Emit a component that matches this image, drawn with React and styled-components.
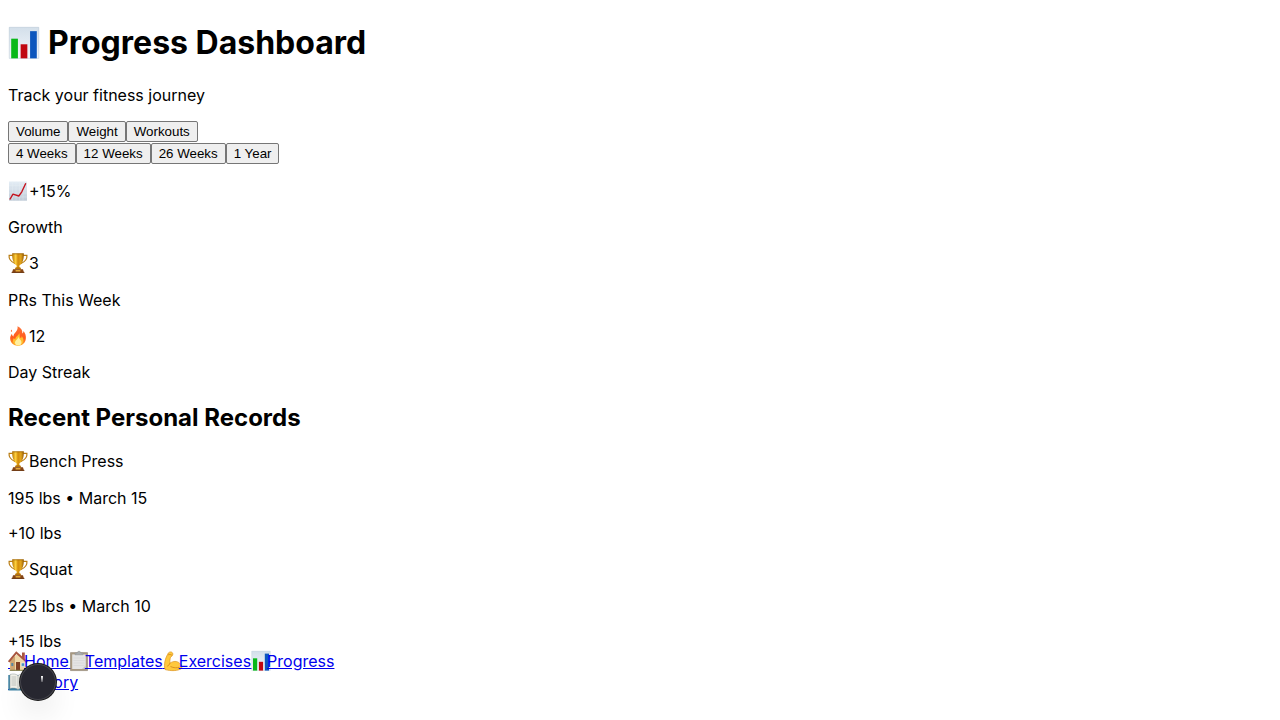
import React from "react";
import styled, { createGlobalStyle } from "styled-components";

const GlobalStyle = createGlobalStyle`
  body {
    margin: 0;
    padding: 0 8px;
    background: #fff;
    color: #000;
    font-family: Inter, "Liberation Sans", sans-serif;
    font-size: 16px;
    line-height: 19px;
  }
`;

const Title = styled.h1`
  display: flex;
  align-items: center;
  gap: 8px;
  margin: 0;
  padding-top: 23px;
  font-size: 32px;
  font-weight: 700;
  line-height: 40px;
`;

const SectionTitle = styled.h2`
  margin: 21px 0 18px;
  font-size: 24px;
  font-weight: 700;
  line-height: 30px;
`;

const Text = styled.p`
  margin: 16px 0;
`;

const Intro = styled(Text)`
  margin: 23px 0 16px;
`;

const ButtonRow = styled.div`
  display: flex;
  height: 22px;
  align-items: flex-start;
`;

const RangeButton = styled.button`
  padding: 2px 7px;
  border: 1px solid #767676;
  border-radius: 2px;
  background: #efefef;
  color: #000;
  font-family: "Liberation Sans", Arial, sans-serif;
`;

const IconLine = styled.div`
  display: flex;
  align-items: flex-start;
  gap: 1px;
  height: ${(p) => (p.$tall ? 22 : 21)}px;
  margin-top: 16px;
  line-height: 21px;
`;

const Delta = styled.div`
  margin-top: 16px;
`;

const Icon = styled.svg`
  display: block;
  flex: none;
  width: ${(p) => p.$size}px;
  height: ${(p) => p.$size}px;
`;

const Nav = styled.nav`
  line-height: 21px;
`;

const NavRow = styled.div`
  display: flex;
`;

const NavLink = styled.a`
  display: flex;
  color: #0000ee;
  text-decoration: underline;
`;

const NavIcon = styled.span`
  width: 16px;
  height: 17px;
  border-bottom: 1px solid #0000ee;
`;

const DevButton = styled.button`
  position: fixed;
  left: 20px;
  bottom: 20px;
  display: grid;
  place-items: center;
  width: 36px;
  height: 36px;
  padding: 0;
  border: 0;
  border-radius: 50%;
  background: #272730;
  box-shadow:
    0 0 0 1px #171717,
    inset 0 0 0 1px rgba(255, 255, 255, 0.14),
    0 16px 32px -8px rgba(0, 0, 0, 0.24);
`;

function Chart({ id }) {
  return (
    <>
      <defs>
        <linearGradient id={id} x1="0" y1="0" x2="0" y2="1">
          <stop offset="0" stopColor="#d3dfea" />
          <stop offset="1" stopColor="#f3f7fb" />
        </linearGradient>
      </defs>
      <rect x="0.6" y="0" width="18.8" height="19.8" fill={`url(#${id})`} />
      <path d="M.8 .2H19.2V19.6H.8Z" fill="none" stroke="#c6d2dc" strokeWidth=".4" />
      <path d="M2 7.3h4.2v12.3H2z" fill="#08b818" />
      <path d="M7.9 10.8h4.2v8.8H7.9z" fill="#c00711" />
      <path d="M13.8 2.6h4.2v17h-4.2z" fill="#0d56bd" />
    </>
  );
}

function Trend({ id }) {
  return (
    <>
      <defs>
        <linearGradient id={id} x1="0" y1="0" x2="0" y2="1">
          <stop offset="0" stopColor="#e4edf5" />
          <stop offset="1" stopColor="#bfcbd7" />
        </linearGradient>
      </defs>
      <rect x="1" y="0.5" width="18" height="19.2" fill={`url(#${id})`} />
      <path d="M4.5.5v19M8 .5v19M11.5.5v19M15 .5v19M1 4.5h18M1 8h18M1 12h18M1 16h18" stroke="#eaf0f6" strokeWidth=".3" />
      <path d="M1.8 18.5 5 13.2l5.8 1.8 3-4.2L17.8 2.3" fill="none" stroke="#c5141f" strokeWidth="1.4" strokeLinejoin="round" />
    </>
  );
}

function Trophy({ id }) {
  return (
    <>
      <defs>
        <linearGradient id={id} x1="0" y1="0" x2="1" y2="0">
          <stop offset="0" stopColor="#b77605" />
          <stop offset=".3" stopColor="#ffd23f" />
          <stop offset=".5" stopColor="#d28b0a" />
          <stop offset=".75" stopColor="#e3a61b" />
          <stop offset="1" stopColor="#925804" />
        </linearGradient>
      </defs>
      <path d="M5 2.4H1.1C.6 6.2 3 8.8 7.4 10.8M15 2.4h3.9c.5 3.8-1.9 6.4-6.3 8.4" fill="none" stroke="#b97c12" strokeWidth="1.2" />
      <path d="M4.2 .6h11.6c.2 6.2-1.3 9.8-4.4 11.8v3H8.6v-3C5.5 10.4 4 6.8 4.2 .6Z" fill={`url(#${id})`} />
      <path d="M4.3 .8h11.4" stroke="#9b6206" strokeWidth=".8" />
      <path d="M7.8 14.3h4.4l1.3 2.2h-7Z" fill="#b97708" />
      <path d="M5 16.3h10l1 3.4H4Z" fill="#874615" />
      <path d="M3.6 19.4h12.8" stroke="#663109" strokeWidth=".9" />
      <path d="M7.6 17h4.8v1.5H7.6Z" fill="#e3aa38" />
    </>
  );
}

function Fire({ id }) {
  return (
    <>
      <defs>
        <linearGradient id={id} x1="0" y1="0" x2="0" y2="1">
          <stop offset="0" stopColor="#ff7338" />
          <stop offset=".6" stopColor="#ff5a1c" />
          <stop offset="1" stopColor="#ffa526" />
        </linearGradient>
      </defs>
      <path d="M9.5.3c4 2 5.2 4.5 4.7 7.2 1-.5 1.3-1.5 1.3-2.5 1.7 2.2 2.8 4.7 2.3 8-.5 4-3.6 6.7-7.8 6.7-4.5 0-7.6-3-7.8-6.7-.2-2.3.7-4 1.8-5.2.1 1.4.6 2.2 1.4 2.7C5.4 6.8 10.5 5.5 9.5.3Z" fill={`url(#${id})`} />
      <path d="M11.3 7c.8 2.5-.1 3.7 1.4 5 .8-.4 1-1.3 1-2.1 1.5 1.8 2.2 3.8 1.5 6-.7 2.3-2.7 3.5-5 3.5-3 0-5.3-2-5.2-4.7 0-1 .3-1.8.9-2.6.4.8.8 1.2 1.5 1.3-.3-3 3.2-3.5 3.9-6.4Z" fill="#ffbd2e" />
      <path d="M10.5 10.6c.1 2.4 3 3.4 3 6 0 1.8-1.4 2.9-3.2 2.9s-3.4-1.1-3.3-2.9c.1-2.3 3.3-3.3 3.5-6Z" fill="#fff0a0" />
      <path d="m2.8 4.8 1.1-1.4.2 1.9-1 .8Z" fill="#ff7040" />
    </>
  );
}

function House() {
  return (
    <>
      <path d="M14 1.5h2.8V8H14z" fill="#a8563f" />
      <path d="M2.2 9.2 9.5 3l8.7 7v9.4H2.2Z" fill="#efd7a7" />
      <path d="m2.2 10 4.8-5v14.4H2.2Z" fill="#cfa570" />
      <path d="M.7 10.8 8.3 1.6l10.8 9.6" fill="none" stroke="#a8563f" strokeWidth="2" />
      <path d="M8 11h4v8.4H8Z" fill="#814024" />
      <path d="M13.3 12h3.3v3.3h-3.3Z" fill="#4d93bd" stroke="#fff" strokeWidth=".5" />
      <path d="M3.3 12h2v3h-2Z" fill="#5686a2" />
      <path d="M1.7 19.3h17" stroke="#7b7a48" />
    </>
  );
}

function Clipboard() {
  return (
    <>
      <path d="M1.5 1.6h17v18h-17z" fill="#a99a82" stroke="#8d8270" strokeWidth=".6" />
      <path d="M3.2 3.4h13.6v14.6H3.2z" fill="#e4e4e4" />
      <path d="M4.5 7h11M4.5 9.5h11M4.5 12h11M4.5 14.5h11" stroke="#d2d2d2" strokeWidth=".5" />
      <path d="M6 3.8V2.1h2L9 .4h2l1 1.7h2v1.7Z" fill="#a9adae" stroke="#8b8f90" strokeWidth=".5" />
      <path d="M16.8 14.5V18h-4Z" fill="#c6c6c6" />
    </>
  );
}

function Biceps() {
  return (
    <>
      <path d="M2 18.5C.6 13.8 2.3 7.3 4.5 3.6 5.2 1.3 7 .4 8.8 1.2c1.3.6 1.4 2.6.3 3.7L7.5 6.2c-.5 2-.8 4-.4 5.9 2.9-2.2 7-2.3 9.5.1 2.1 1.8 2.7 4 1.8 5.4-3.2 2.3-10.5 2.7-16.4.9Z" fill="#ffc83d" stroke="#dc9320" strokeWidth=".7" />
      <path d="M5.2 3.8c1.4-.5 2.4-.4 3.6.3M6.9 12c-.4 1.8-1.3 2.5-2.7 3.2M7.5 15.5c3 1.5 6.5 1.6 9 .7" fill="none" stroke="#cf841b" strokeWidth=".8" />
    </>
  );
}

function Book() {
  return (
    <>
      <path d="M.3 3h19.4v15.5H.3Z" fill="#3d83a4" />
      <path d="M2 2.5c3-1 6-.6 8 1 2-1.6 5-2 8-1v14c-3-.8-6-.5-8 1-2-1.5-5-1.8-8-1Z" fill="#f1f1e9" stroke="#8d989c" strokeWidth=".5" />
      <path d="M10 3.5v14M3.5 5h4.8M3.5 7h4.8M3.5 9h4.8M3.5 11h4.8M3.5 13h4.8M11.7 5h4.8M11.7 7h4.8M11.7 9h4.8M11.7 11h4.8" stroke="#8f9496" strokeWidth=".5" />
    </>
  );
}

const drawings = {
  chart: Chart,
  trend: Trend,
  trophy: Trophy,
  fire: Fire,
  house: House,
  clipboard: Clipboard,
  biceps: Biceps,
  book: Book,
};

function Pictogram({ name, size = 20 }) {
  const id = React.useId();
  const Drawing = drawings[name];
  return (
    <Icon $size={size} viewBox="0 0 20 20" overflow="visible" aria-hidden="true">
      <Drawing id={id} />
    </Icon>
  );
}

const metrics = ["Volume", "Weight", "Workouts"];
const ranges = ["4 Weeks", "12 Weeks", "26 Weeks", "1 Year"];

const stats = [
  { icon: "trend", value: "+15%", label: "Growth" },
  { icon: "trophy", value: "3", label: "PRs This Week" },
  { icon: "fire", value: "12", label: "Day Streak" },
];

const records = [
  { name: "Bench Press", detail: "195 lbs • March 15", delta: "+10 lbs" },
  { name: "Squat", detail: "225 lbs • March 10", delta: "+15 lbs" },
];

const navRows = [
  [
    { icon: "house", label: "Home" },
    { icon: "clipboard", label: "Templates" },
    { icon: "biceps", label: "Exercises" },
    { icon: "chart", label: "Progress" },
  ],
  [{ icon: "book", label: "History" }],
];

export default function App() {
  return (
    <>
      <GlobalStyle />
      <header>
        <Title>
          <Pictogram name="chart" size={32} />
          Progress Dashboard
        </Title>
        <Intro>Track your fitness journey</Intro>
      </header>
      <main>
        <ButtonRow>
          {metrics.map((m) => (
            <RangeButton key={m}>{m}</RangeButton>
          ))}
        </ButtonRow>
        <ButtonRow>
          {ranges.map((r) => (
            <RangeButton key={r}>{r}</RangeButton>
          ))}
        </ButtonRow>
        {stats.map((s) => (
          <section key={s.label}>
            <IconLine $tall={s.icon === "trophy"}>
              <Pictogram name={s.icon} />
              {s.value}
            </IconLine>
            <Text>{s.label}</Text>
          </section>
        ))}
        <SectionTitle>Recent Personal Records</SectionTitle>
        {records.map((r) => (
          <article key={r.name}>
            <IconLine $tall>
              <Pictogram name="trophy" />
              {r.name}
            </IconLine>
            <Text>{r.detail}</Text>
            <Delta>{r.delta}</Delta>
          </article>
        ))}
      </main>
      <Nav>
        {navRows.map((row, i) => (
          <NavRow key={i}>
            {row.map((item) => (
              <NavLink key={item.label} href="#">
                <NavIcon>
                  <Pictogram name={item.icon} />
                </NavIcon>
                {item.label}
              </NavLink>
            ))}
          </NavRow>
        ))}
      </Nav>
      <DevButton aria-label="Open developer tools">
        <svg width="36" height="36" viewBox="0 0 36 36" aria-hidden="true">
          <defs>
            <linearGradient id="mark" x1="0" y1="0" x2="0" y2="1">
              <stop offset="0" stopColor="#fff" />
              <stop offset="1" stopColor="#fff" stopOpacity="0.2" />
            </linearGradient>
          </defs>
          <rect x="21" y="12" width="2" height="6" fill="url(#mark)" />
        </svg>
      </DevButton>
    </>
  );
}
